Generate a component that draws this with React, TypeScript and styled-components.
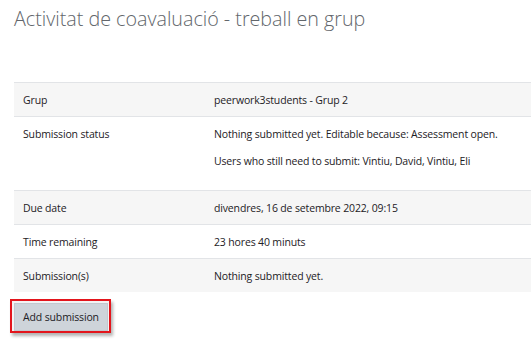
import React from "react";
import styled, { createGlobalStyle } from "styled-components";

const Global = createGlobalStyle`
  html, body { margin: 0; padding: 0; background: #fff; }
  body { font-family: "Open Sans", "Noto Sans", sans-serif; color: #1d2125; }
`;

const Page = styled.div`
  width: 531px;
  height: 344px;
  overflow: hidden;
  padding: 0 0 0 14px;
  box-sizing: border-box;
`;

const Title = styled.h2`
  margin: 0;
  padding-top: 4px;
  height: 82px;
  box-sizing: border-box;
  font-family: "Open Sans", sans-serif;
  font-weight: 300;
  font-size: 19.7px;
  line-height: 30px;
  color: #62666b;
  white-space: nowrap;
`;

const Table = styled.table`
  width: 560px;
  border-collapse: collapse;
  font-size: 10.5px;
  letter-spacing: -0.15px;
  line-height: 16px;
`;

const Row = styled.tr<{ $striped?: boolean }>`
  background: ${(p) => (p.$striped ? "#f6f6f6" : "#fff")};
  border-top: 1px solid #e2e4e7;
`;

const Label = styled.td`
  width: 173px;
  padding: 9px 9px 8px 9px;
  vertical-align: top;
  white-space: nowrap;
`;

const Value = styled.td`
  padding: 9px 9px 8px 9px;
  vertical-align: top;
  white-space: nowrap;
`;

const Para = styled.p`
  margin: 0 0 11px;
  &:last-child { margin-bottom: 13px; }
`;

const Highlight = styled.div`
  display: inline-block;
  margin: 7px 0 0 -4px;
  padding: 2px 1px 0 2px;
  border: 2px solid #e3151c;
  box-shadow: 2px 3px 3px rgba(0, 0, 0, 0.3);
  background: #f3f3f3;
`;

const Button = styled.button`
  display: block;
  width: 94px;
  height: 28px;
  padding: 0;
  border: 1px solid #c3c8cf;
  background: #ced4da;
  color: #1d2125;
  font-family: "Open Sans", sans-serif;
  font-size: 10.5px;
  letter-spacing: -0.15px;
  cursor: pointer;
`;

const rows = [
  { label: "Grup", values: ["peerwork3students - Grup 2"], striped: true },
  {
    label: "Submission status",
    values: [
      "Nothing submitted yet. Editable because: Assessment open.",
      "Users who still need to submit: Vintiu, David, Vintiu, Eli",
    ],
    striped: false,
    multi: true,
  },
  { label: "Due date", values: ["divendres, 16 de setembre 2022, 09:15"], striped: true },
  { label: "Time remaining", values: ["23 hores 40 minuts"], striped: false },
  { label: "Submission(s)", values: ["Nothing submitted yet."], striped: true },
];

export default function App() {
  return (
    <>
      <Global />
      <Page>
        <Title>Activitat de coavaluació - treball en grup</Title>
        <Table>
          <tbody>
            {rows.map((r) => (
              <Row key={r.label} $striped={r.striped}>
                <Label>{r.label}</Label>
                <Value>
                  {r.multi
                    ? r.values.map((v) => <Para key={v}>{v}</Para>)
                    : r.values[0]}
                </Value>
              </Row>
            ))}
          </tbody>
        </Table>
        <Highlight>
          <Button>Add submission</Button>
        </Highlight>
      </Page>
    </>
  );
}
